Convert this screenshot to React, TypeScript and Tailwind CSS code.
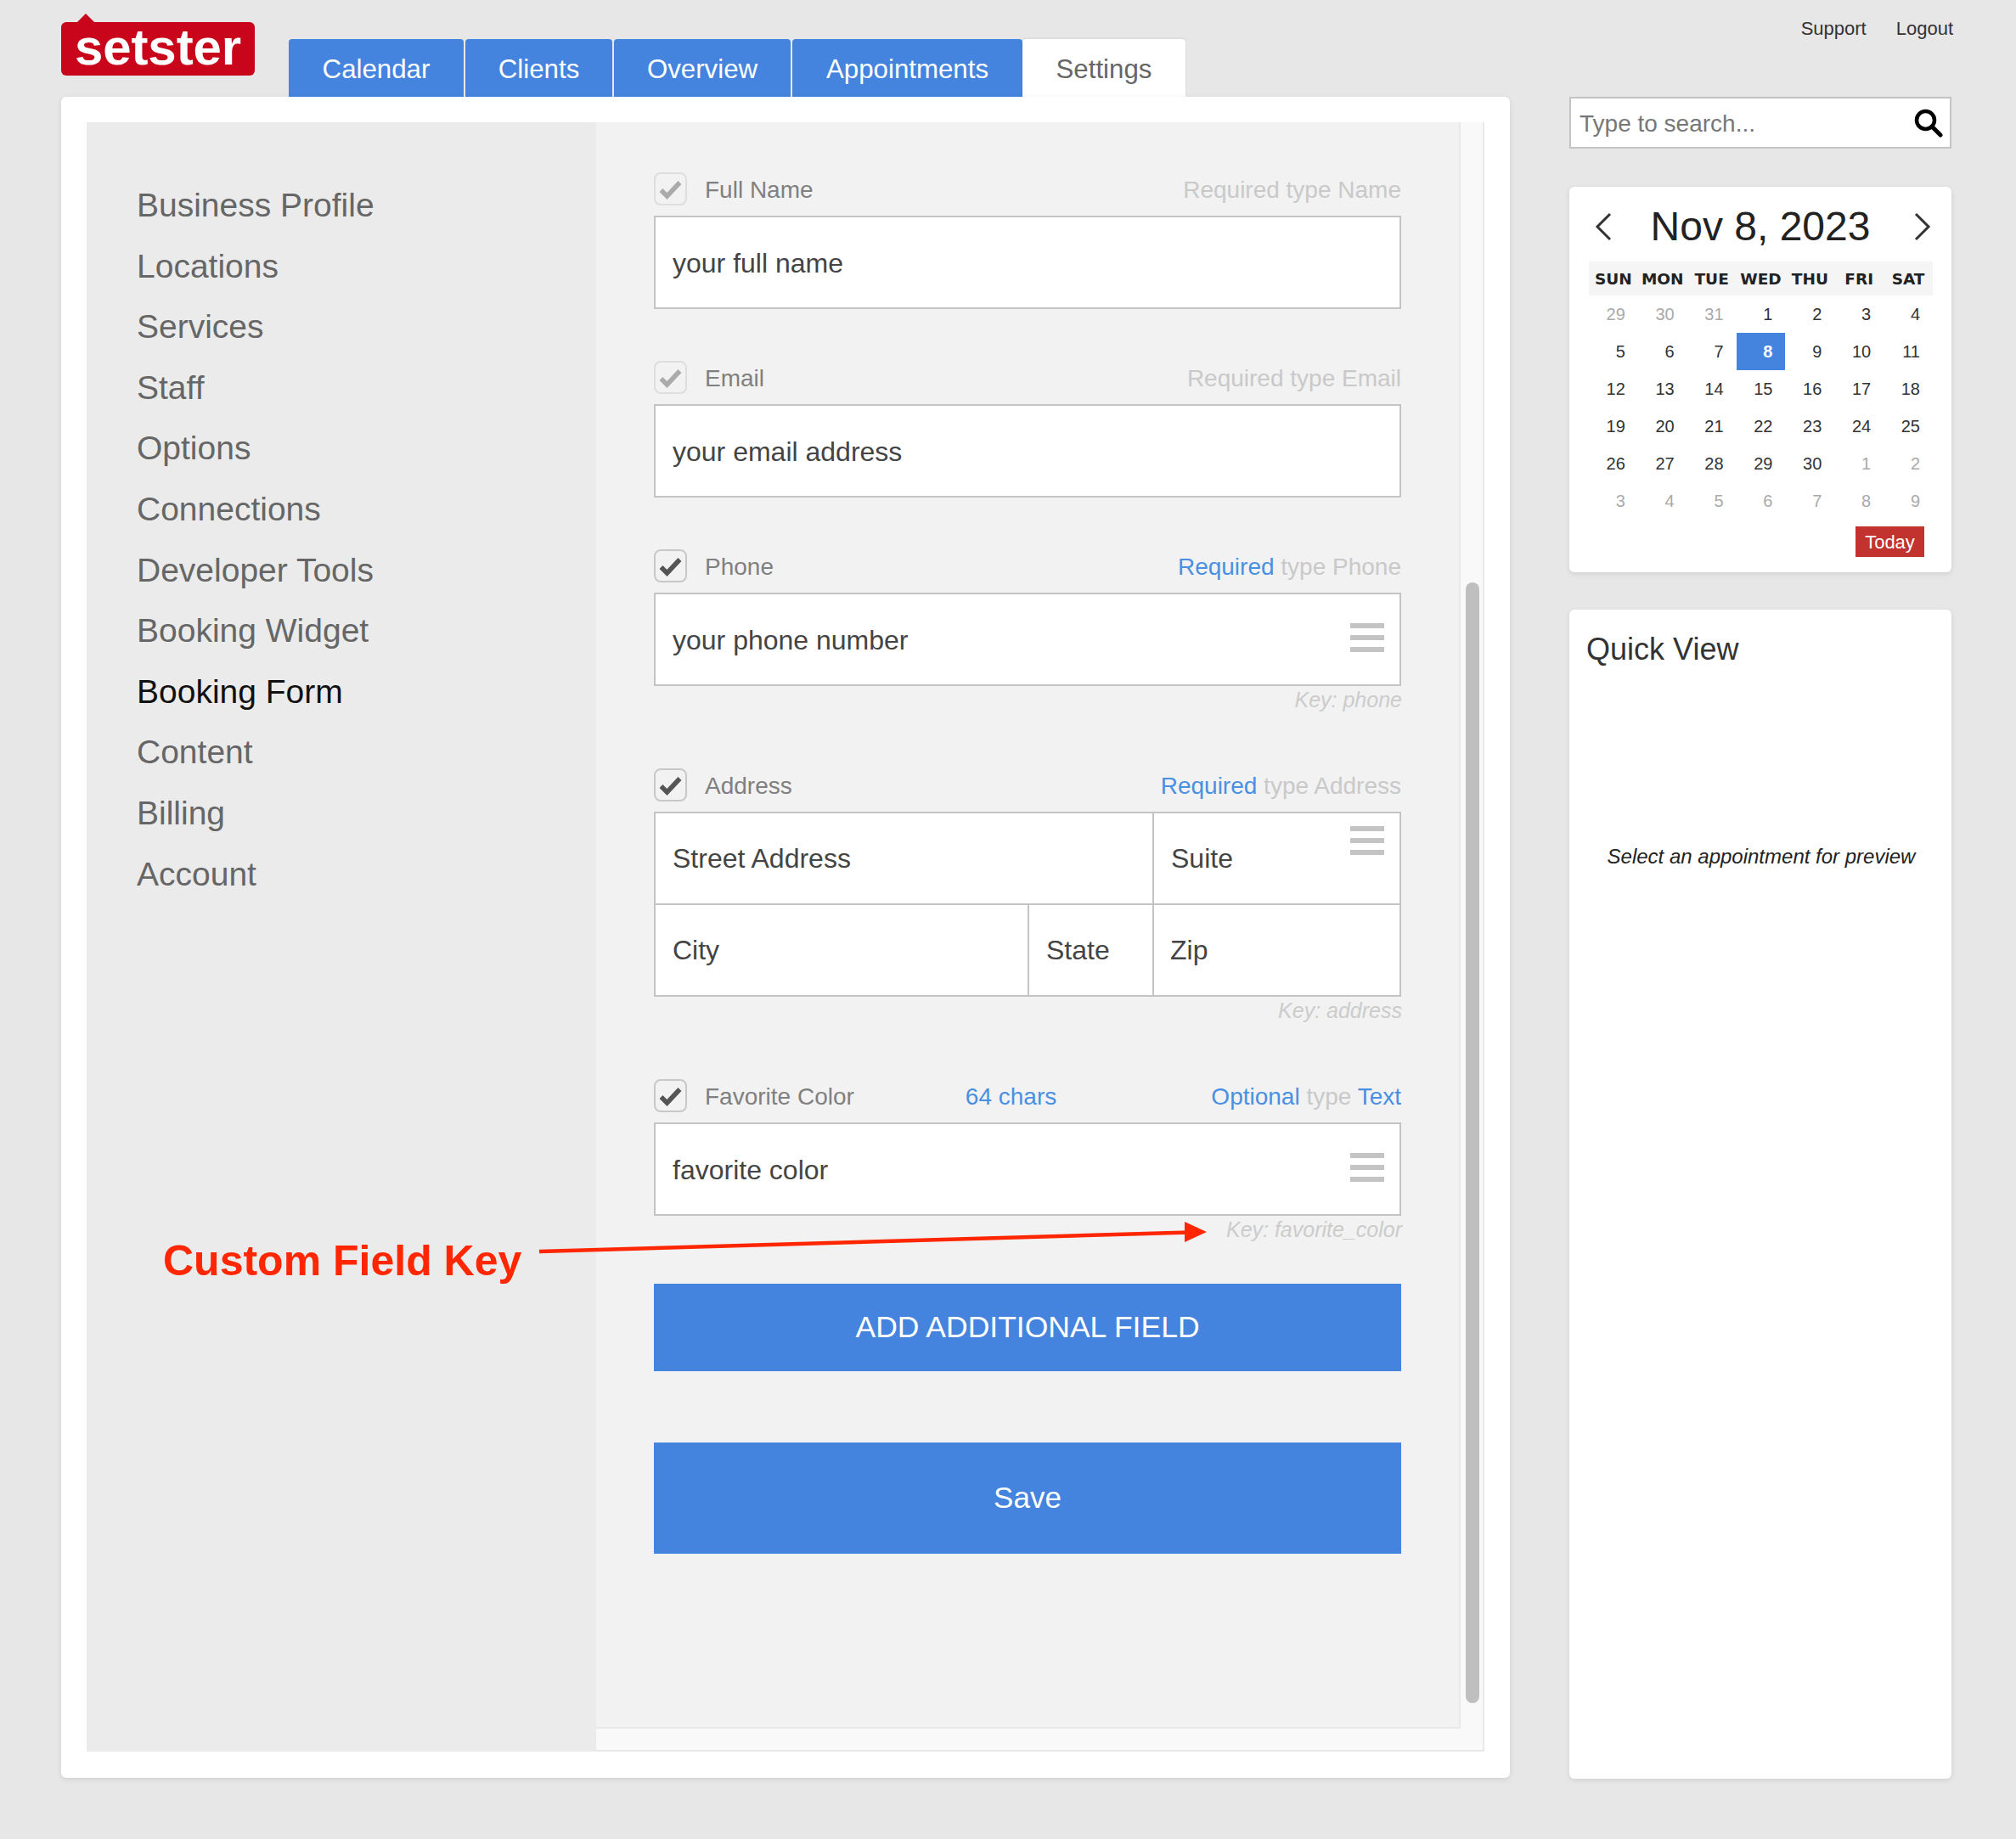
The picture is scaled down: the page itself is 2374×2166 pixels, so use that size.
import React from "react";

const nav = ["Business Profile","Locations","Services","Staff","Options","Connections","Developer Tools","Booking Widget","Booking Form","Content","Billing","Account"];
const tabs = [["Calendar","w-[206px]"],["Clients","w-[173px]"],["Overview","w-[208px]"],["Appointments","w-[271px]"]];
const weekdays = ["SUN","MON","TUE","WED","THU","FRI","SAT"];
const days: [number, boolean][] = [
  [29,true],[30,true],[31,true],[1,false],[2,false],[3,false],[4,false],
  [5,false],[6,false],[7,false],[8,false],[9,false],[10,false],[11,false],
  [12,false],[13,false],[14,false],[15,false],[16,false],[17,false],[18,false],
  [19,false],[20,false],[21,false],[22,false],[23,false],[24,false],[25,false],
  [26,false],[27,false],[28,false],[29,false],[30,false],[1,true],[2,true],
  [3,true],[4,true],[5,true],[6,true],[7,true],[8,true],[9,true],
];

function Check({ dim }: { dim?: boolean }) {
  return (
    <span className={`flex h-[39px] w-[39px] shrink-0 items-center justify-center rounded-[8px] border-2 ${dim ? "border-[#dedede]" : "border-[#c8c8c8]"}`}>
      <svg width="35" height="35" viewBox="0 0 35 35" fill="none">
        <path d="M6.5 19 L13.5 26 L28.5 10" stroke={dim ? "#aaaaaa" : "#555555"} strokeWidth="5.5" />
      </svg>
    </span>
  );
}

function Bars({ top }: { top: string }) {
  return (
    <span className={`absolute right-[18px] flex w-[40px] flex-col gap-[8px] ${top}`}>
      <span className="h-[6px] bg-[#c4c4c4]" />
      <span className="h-[6px] bg-[#c4c4c4]" />
      <span className="h-[6px] bg-[#c4c4c4]" />
    </span>
  );
}

function Header({ label, dim, hint, extra }: { label: string; dim?: boolean; hint: React.ReactNode; extra?: string }) {
  return (
    <div className="mb-[12px] flex h-[39px] items-center text-[28px]">
      <Check dim={dim} />
      <span className="ml-[21px] pt-[3px] text-[#808080]">{label}</span>
      {extra && <span className="ml-[131px] pt-[3px] text-[#4a90e2]">{extra}</span>}
      <span className="ml-auto pt-[3px] text-[#c9c9c9]">{hint}</span>
    </div>
  );
}

function Box({ text, bars }: { text: string; bars?: boolean }) {
  return (
    <div className="relative flex h-[110px] items-center border-2 border-[#c4c4c4] bg-white pl-[20px] text-[32px] text-[#444444]">
      <span className="pt-[1px]">{text}</span>
      {bars && <Bars top="top-[34px]" />}
    </div>
  );
}

function Key({ text }: { text: string }) {
  return <div className="mt-[1px] -mr-[1px] h-[32px] text-right text-[25px] leading-[30px] text-[#cccccc] italic">{text}</div>;
}

const R = ({ children }: { children: React.ReactNode }) => <span className="text-[#4a90e2]">{children}</span>;

export default function App() {
  return (
    <div className="relative h-[2166px] w-[2374px] overflow-hidden bg-[#e7e7e7] pl-[72px] font-['Liberation_Sans',Arial,sans-serif]">
      {/* Top bar */}
      <div className="flex h-[114px] w-[2228px] items-start">
        <div className="relative mt-[26px] flex h-[63px] w-[228px] items-center justify-center rounded-[6px] bg-[#c8051b]">
          <svg className="absolute top-[-10px] left-[18px]" width="22" height="11" viewBox="0 0 22 11">
            <path d="M0 11 L11 0 L22 11 Z" fill="#c8051b" />
          </svg>
          <span className="-mt-[3px] text-[60px] leading-none font-bold tracking-[-0.1px] text-white">setster</span>
        </div>
        <div className="mt-[46px] ml-[40px] flex h-[68px] gap-[2px] text-[31.25px]">
          {tabs.map(([t, w]) => (
            <div key={t} className={`flex items-center justify-center rounded-t-[4px] bg-[#4484de] pt-[5px] text-white ${w}`}>{t}</div>
          ))}
          <div className="-ml-[2px] flex w-[192px] items-center justify-center rounded-t-[4px] bg-white pt-[5px] text-[#666666] shadow-[0_-1px_3px_rgba(0,0,0,0.08)]">Settings</div>
        </div>
        <div className="mt-[21px] ml-auto flex gap-[35px] text-[22px] leading-[26px] text-[#333333]">
          <span>Support</span>
          <span>Logout</span>
        </div>
      </div>

      <div className="flex items-start gap-[70px]">
        {/* Main card */}
        <div className="flex h-[1980px] w-[1706px] rounded-[6px] bg-white pt-[30px] pr-[30px] pb-[31px] pl-[30px] shadow-[0_2px_6px_rgba(0,0,0,0.1)]">
          <nav className="w-[600px] bg-[#ebebeb] pt-[62px] pl-[59px] text-[39px] leading-[71.6px] text-[#666666]">
            {nav.map((n) => (
              <div key={n} className={n === "Booking Form" ? "text-[#111111]" : ""}>{n}</div>
            ))}
          </nav>
          <div className="relative flex-1 border-r-2 border-b-2 border-[#e9e9e9] bg-[#f9f9f9]">
            <div className="h-[1892px] w-[1018px] border-r-2 border-b-2 border-[#e9e9e9] bg-[#f2f2f2] pt-[59px] pl-[68px]">
              <div className="w-[880px]">
                <Header label="Full Name" dim hint="Required type Name" />
                <Box text="your full name" />
                <div className="h-[61px]" />
                <Header label="Email" dim hint="Required type Email" />
                <Box text="your email address" />
                <div className="h-[61px]" />
                <Header label="Phone" hint={<><R>Required</R> type Phone</>} />
                <Box text="your phone number" bars />
                <Key text="Key: phone" />
                <div className="h-[64px]" />
                <Header label="Address" hint={<><R>Required</R> type Address</>} />
                <div className="relative border-2 border-[#c4c4c4] bg-white text-[32px] text-[#444444]">
                  <div className="flex h-[108px] border-b-2 border-[#c4c4c4]">
                    <div className="flex w-[587px] items-center border-r-2 border-[#c4c4c4] pl-[20px]">Street Address</div>
                    <div className="flex flex-1 items-center pl-[20px]">Suite</div>
                  </div>
                  <div className="flex h-[106px]">
                    <div className="flex w-[440px] items-center border-r-2 border-[#c4c4c4] pl-[20px]">City</div>
                    <div className="flex w-[147px] items-center border-r-2 border-[#c4c4c4] pl-[20px]">State</div>
                    <div className="flex flex-1 items-center pl-[19px]">Zip</div>
                  </div>
                  <Bars top="top-[15px]" />
                </div>
                <Key text="Key: address" />
                <div className="h-[64px]" />
                <Header label="Favorite Color" extra="64 chars" hint={<><R>Optional</R> type <R>Text</R></>} />
                <Box text="favorite color" bars />
                <Key text="Key: favorite_color" />
                <div className="h-[47px]" />
                <div className="flex h-[103px] items-center justify-center bg-[#4484de] text-[35.5px] text-white">ADD ADDITIONAL FIELD</div>
                <div className="h-[84px]" />
                <div className="flex h-[131px] items-center justify-center bg-[#4484de] text-[35px] text-white">Save</div>
              </div>
            </div>
            {/* Scrollbar */}
            <div className="absolute top-[542px] left-[1024px] h-[1320px] w-[16px] rounded-full bg-[#bfbfbf]" />
          </div>
        </div>

        {/* Right column */}
        <div className="w-[450px]">
          <div className="flex h-[61px] items-center justify-between border-2 border-[#c4c4c4] bg-white pr-[8px] pl-[10px] text-[28px] text-[#777777]">
            <span className="pt-[3px]">Type to search...</span>
            <svg width="34" height="34" viewBox="0 0 34 34" fill="none">
              <circle cx="13.5" cy="13.5" r="10.5" stroke="#000000" strokeWidth="4.5" />
              <path d="M21 21 L31 31" stroke="#000000" strokeWidth="5" strokeLinecap="round" />
            </svg>
          </div>

          <div className="mt-[45px] h-[454px] rounded-[6px] bg-white pr-[22px] pl-[23px] shadow-[0_2px_6px_rgba(0,0,0,0.1)]">
            <div className="flex h-[88px] items-center justify-between pt-[5px] pr-[2px] pl-[7px] text-[48px] text-[#222222]">
              <svg width="20" height="34" viewBox="0 0 20 34" fill="none">
                <path d="M18 2 L3 17 L18 32" stroke="#333333" strokeWidth="3" />
              </svg>
              <span className="-ml-[6px]">Nov 8, 2023</span>
              <svg width="20" height="34" viewBox="0 0 20 34" fill="none">
                <path d="M2 2 L17 17 L2 32" stroke="#333333" strokeWidth="3" />
              </svg>
            </div>
            <div className="grid h-[40px] grid-cols-7 items-center bg-[#f5f5f5] pt-[2px] text-center font-['DejaVu_Sans',sans-serif] text-[18.5px] font-bold text-[#222222]">
              {weekdays.map((d) => <div key={d}>{d}</div>)}
            </div>
            <div className="grid grid-cols-7 text-[20px]">
              {days.map(([d, muted], i) => (
                <div
                  key={i}
                  className={`flex h-[44px] items-center justify-end pr-[15px] ${i === 10 ? "bg-[#4484de] font-bold text-white" : muted ? "text-[#aaaaaa]" : "text-[#333333]"}`}
                >
                  {d}
                </div>
              ))}
            </div>
            <div className="mt-[8px] mr-[10px] ml-auto flex h-[36px] w-[81px] items-center justify-center bg-[#c23330] text-[22px] text-white">Today</div>
          </div>

          <div className="mt-[44px] h-[1377px] rounded-[6px] bg-white pt-[24px] pl-[20px] shadow-[0_2px_6px_rgba(0,0,0,0.1)]">
            <div className="text-[36px] leading-[46px] text-[#333333]">Quick View</div>
            <div className="mt-[206px] pr-[18px] text-center text-[24px] leading-[30px] text-[#222222] italic">Select an appointment for preview</div>
          </div>
        </div>
      </div>

      {/* Annotation */}
      <div className="absolute top-[1456px] left-[192px] text-[50px] leading-[58px] font-bold text-[#ff2600]">Custom Field Key</div>
      <svg className="absolute top-[1430px] left-[630px]" width="800" height="50" viewBox="0 0 800 50" fill="none">
        <path d="M5 44 L770 21.5" stroke="#ff2600" strokeWidth="4.5" />
        <path d="M765 9 L791 21 L765 33 Z" fill="#ff2600" />
      </svg>
    </div>
  );
}
